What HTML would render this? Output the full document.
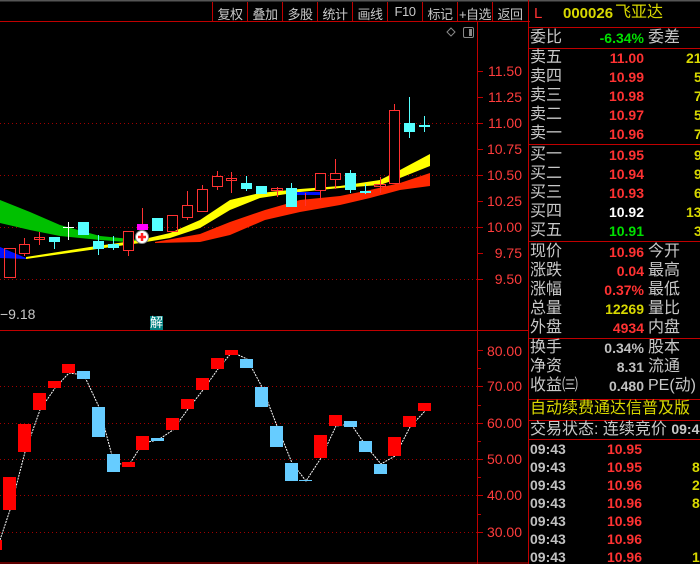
<!DOCTYPE html>
<html><head><meta charset="utf-8"><style>
*{margin:0;padding:0;box-sizing:border-box}
body{width:700px;height:564px;background:#000;overflow:hidden;position:relative;font-family:"Liberation Sans","Noto Sans CJK SC",sans-serif}
.t{position:absolute;white-space:nowrap;line-height:1}
.lb{color:#c8c8c8;font-size:16px}
.n{font-family:"Liberation Sans",sans-serif;font-weight:bold;font-size:14px;text-align:right}
.r{color:#ff3232}.y{color:#d8d800}.g{color:#00e000}.w{color:#fff}.gr{color:#c0c0c0}
.btn{position:absolute;top:4px;color:#c8c8c8;font-size:13px;width:34px;text-align:center;white-space:nowrap;letter-spacing:-0.5px}
</style></head><body>
<svg width="700" height="564" style="position:absolute;left:0;top:0">
<line x1="0" y1="0.5" x2="700" y2="0.5" stroke="#555" stroke-width="2"/>
<line x1="0" y1="21.5" x2="530" y2="21.5" stroke="#c00000"/>
<g stroke="#c00000">
<line x1="212.5" y1="2" x2="212.5" y2="21"/><line x1="247.5" y1="2" x2="247.5" y2="21"/><line x1="282.5" y1="2" x2="282.5" y2="21"/><line x1="317.5" y1="2" x2="317.5" y2="21"/><line x1="352.5" y1="2" x2="352.5" y2="21"/><line x1="387.5" y1="2" x2="387.5" y2="21"/><line x1="422.5" y1="2" x2="422.5" y2="21"/><line x1="457.5" y1="2" x2="457.5" y2="21"/><line x1="492.5" y1="2" x2="492.5" y2="21"/>
<line x1="477.5" y1="21" x2="477.5" y2="564"/>
<line x1="528.5" y1="0" x2="528.5" y2="564"/>
<line x1="0" y1="330.5" x2="528" y2="330.5"/>
<line x1="0" y1="563" x2="528" y2="563"/>
</g>
<path d="M447 32 l4 -4 l4 4 l-4 4z" fill="none" stroke="#888"/>
<rect x="463.5" y="27.5" width="10" height="10" rx="1.5" fill="none" stroke="#888"/><rect x="469" y="29" width="3" height="7" fill="#888"/>
<g stroke="#a00000" stroke-dasharray="1,3">
<line x1="0" y1="123.5" x2="477" y2="123.5"/><line x1="0" y1="175.5" x2="477" y2="175.5"/><line x1="0" y1="227.5" x2="477" y2="227.5"/><line x1="0" y1="279.5" x2="477" y2="279.5"/>
<line x1="0" y1="386.5" x2="477" y2="386.5"/><line x1="0" y1="423.5" x2="477" y2="423.5"/><line x1="0" y1="459.5" x2="477" y2="459.5"/><line x1="0" y1="495.5" x2="477" y2="495.5"/><line x1="0" y1="532.5" x2="477" y2="532.5"/>
</g>
<g stroke="#c00000">
<line x1="477" y1="71.5" x2="483" y2="71.5"/><line x1="477" y1="97.5" x2="483" y2="97.5"/><line x1="477" y1="123.5" x2="483" y2="123.5"/><line x1="477" y1="149.5" x2="483" y2="149.5"/><line x1="477" y1="175.5" x2="483" y2="175.5"/><line x1="477" y1="201.5" x2="483" y2="201.5"/><line x1="477" y1="227.5" x2="483" y2="227.5"/><line x1="477" y1="253.5" x2="483" y2="253.5"/><line x1="477" y1="279.5" x2="483" y2="279.5"/>
<line x1="477" y1="350.5" x2="483" y2="350.5"/><line x1="477" y1="368.5" x2="481" y2="368.5"/><line x1="477" y1="386.5" x2="483" y2="386.5"/><line x1="477" y1="405.5" x2="481" y2="405.5"/><line x1="477" y1="423.5" x2="483" y2="423.5"/><line x1="477" y1="441.5" x2="481" y2="441.5"/><line x1="477" y1="459.5" x2="483" y2="459.5"/><line x1="477" y1="477.5" x2="481" y2="477.5"/><line x1="477" y1="495.5" x2="483" y2="495.5"/><line x1="477" y1="514.5" x2="481" y2="514.5"/><line x1="477" y1="532.5" x2="483" y2="532.5"/>
</g>
<g fill="#ff3c3c" font-family="Liberation Sans" font-size="14" text-anchor="end">
<text x="522" y="76">11.50</text><text x="522" y="102">11.25</text><text x="522" y="128">11.00</text><text x="522" y="154">10.75</text><text x="522" y="180">10.50</text><text x="522" y="206">10.25</text><text x="522" y="232">10.00</text><text x="522" y="258">9.75</text><text x="522" y="284">9.50</text>
<text x="522" y="356">80.00</text><text x="522" y="391">70.00</text><text x="522" y="428">60.00</text><text x="522" y="464">50.00</text><text x="522" y="500">40.00</text><text x="522" y="537">30.00</text>
</g>
<path d="M0 200 L30 212 L60 225 L100 236 L140 240 L140 243 L100 240 L60 236 L30 230 L0 223Z" fill="#00c000"/>
<path d="M0 247 L26 258 L26 259 L0 258Z" fill="#0010ff"/>
<path d="M26 257 L90 247 L140 240 L170 233 L200 220 L230 200 L260 193 L300 189 L340 186 L380 180 L400 170 L430 154 L430 166 L400 178 L380 185 L340 188 L300 192 L260 198 L230 210 L200 228 L170 238 L140 243 L90 250 L26 259Z" fill="#ffff00"/>
<path d="M292 192 L320 192 L320 195 L292 195Z" fill="#0010ff"/>
<path d="M155 242 L200 234 L230 222 L265 210 L300 200 L340 196 L370 190 L400 183 L430 173 L430 186 L400 190 L370 198 L340 205 L300 212 L265 220 L230 235 L200 242 L155 243Z" fill="#ff2800"/>
<g stroke="#ff3232" fill="none">
<rect x="4.5" y="248.5" width="11" height="29"/>
<line x1="24.5" y1="238" x2="24.5" y2="256"/><rect x="19.5" y="244.5" width="10" height="9" fill="#000"/>
<line x1="39.5" y1="232" x2="39.5" y2="245"/><rect x="34.5" y="237.5" width="10" height="2"/>
<line x1="128.5" y1="231" x2="128.5" y2="256"/><rect x="123.5" y="231.5" width="10" height="19" fill="#000"/>
<line x1="142.5" y1="208" x2="142.5" y2="224"/>
<rect x="167.5" y="215.5" width="10" height="16"/>
<line x1="187.5" y1="191" x2="187.5" y2="220"/><rect x="182.5" y="205.5" width="10" height="12" fill="#000"/>
<line x1="202.5" y1="185" x2="202.5" y2="211"/><rect x="197.5" y="189.5" width="10" height="22" fill="#000"/>
<line x1="217.5" y1="171" x2="217.5" y2="190"/><rect x="212.5" y="176.5" width="10" height="10" fill="#000"/>
<line x1="231.5" y1="172" x2="231.5" y2="193"/><rect x="226.5" y="178.5" width="10" height="2"/>
<line x1="277.5" y1="187" x2="277.5" y2="197"/><rect x="271.5" y="188.5" width="11" height="2"/>
<line x1="305.5" y1="193" x2="305.5" y2="206"/><line x1="320.5" y1="190" x2="320.5" y2="200"/>
<rect x="315.5" y="173.5" width="10" height="17" fill="#000"/>
<line x1="335.5" y1="159" x2="335.5" y2="189"/><rect x="330.5" y="173.5" width="10" height="6" fill="#000"/>
<line x1="380.5" y1="177" x2="380.5" y2="193"/><rect x="374.5" y="184.5" width="11" height="2"/>
<line x1="394.5" y1="104" x2="394.5" y2="110"/><rect x="389.5" y="110.5" width="10" height="73" fill="#000"/>
</g>
<rect x="137" y="224" width="11" height="6" fill="#ff00ff"/>
<g fill="#55ffff" stroke="#55ffff">
<line x1="54.5" y1="237" x2="54.5" y2="249"/><rect x="49" y="237" width="11" height="5" stroke="none"/>
<rect x="78" y="222" width="11" height="13" stroke="none"/>
<line x1="98.5" y1="235" x2="98.5" y2="255"/><rect x="93" y="241" width="11" height="8" stroke="none"/>
<line x1="113.5" y1="236" x2="113.5" y2="250"/><rect x="108" y="244" width="11" height="4" stroke="none"/>
<rect x="152" y="218" width="11" height="13" stroke="none"/>
<line x1="246.5" y1="176" x2="246.5" y2="191"/><rect x="241" y="183" width="11" height="6" stroke="none"/>
<rect x="256" y="186" width="11" height="8" stroke="none"/>
<line x1="291.5" y1="183" x2="291.5" y2="207"/><rect x="286" y="188" width="11" height="19" stroke="none"/>
<line x1="350.5" y1="170" x2="350.5" y2="193"/><rect x="345" y="173" width="11" height="17" stroke="none"/>
<line x1="365.5" y1="184" x2="365.5" y2="194"/><rect x="360" y="191" width="11" height="2" stroke="none"/>
<line x1="409.5" y1="97" x2="409.5" y2="138"/><rect x="404" y="123" width="11" height="9" stroke="none"/>
<line x1="424.5" y1="116" x2="424.5" y2="132"/><rect x="419" y="125" width="11" height="2" stroke="none"/>
</g>
<g stroke="#fff"><line x1="68.5" y1="222" x2="68.5" y2="240"/><line x1="63" y1="227.5" x2="74" y2="227.5"/></g>
<circle cx="142" cy="237" r="6.5" fill="#fff" stroke="#888"/>
<path d="M138 237h8M142 233v8" stroke="#ff2020" stroke-width="2.5"/>
<polyline points="0,540 10,510 25,452 40,410 55,388 69,373 84,375 99,407 114,463 129,465 143,443 158,440 173,430 188,409 203,390 218,369 232,352 247,359 262,387 277,426 292,463 306,481 321,458 336,426 351,424 366,446 381,464 395,456 410,427 425,411" fill="none" stroke="#fff" stroke-dasharray="2,1"/>
<g fill="#ff0000">
<rect x="0" y="540" width="2" height="10"/><rect x="3" y="477" width="13" height="33"/><rect x="18" y="424" width="13" height="28"/><rect x="33" y="393" width="13" height="17"/><rect x="48" y="381" width="13" height="7"/><rect x="62" y="364" width="13" height="9"/>
<rect x="122" y="462" width="13" height="5"/><rect x="136" y="436" width="13" height="14"/><rect x="166" y="418" width="13" height="12"/><rect x="181" y="399" width="13" height="10"/><rect x="196" y="378" width="13" height="12"/><rect x="211" y="358" width="13" height="11"/><rect x="225" y="350" width="13" height="5"/>
<rect x="314" y="435" width="13" height="23"/><rect x="329" y="415" width="13" height="11"/><rect x="388" y="437" width="13" height="19"/><rect x="403" y="416" width="13" height="11"/><rect x="418" y="403" width="13" height="8"/>
</g>
<g fill="#66ccff">
<rect x="77" y="371" width="13" height="8"/><rect x="92" y="407" width="13" height="30"/><rect x="107" y="454" width="13" height="18"/><rect x="151" y="438" width="13" height="3"/><rect x="240" y="359" width="13" height="9"/><rect x="255" y="387" width="13" height="20"/>
<rect x="270" y="426" width="13" height="21"/><rect x="285" y="463" width="13" height="18"/><rect x="299" y="480" width="13" height="1"/><rect x="344" y="421" width="13" height="6"/><rect x="359" y="441" width="13" height="11"/><rect x="374" y="464" width="13" height="10"/>
</g>
<g stroke="#c00000">
<line x1="529" y1="27.5" x2="700" y2="27.5"/><line x1="529" y1="48.5" x2="700" y2="48.5"/><line x1="529" y1="144.5" x2="700" y2="144.5"/><line x1="529" y1="241.5" x2="700" y2="241.5"/><line x1="529" y1="338.5" x2="700" y2="338.5"/><line x1="529" y1="399.5" x2="700" y2="399.5"/><line x1="529" y1="420.5" x2="700" y2="420.5"/><line x1="529" y1="439.5" x2="700" y2="439.5"/>
</g>
</svg>
<div class="t" style="left:0;top:307px;color:#c8c8c8;font-size:14px">−9.18</div>
<div class="t" style="left:150px;top:316px;width:13px;height:14px;background:#008080;color:#fff;font-size:13px;text-align:center">解</div>
<div class="btn" style="left:213px">复权</div><div class="btn" style="left:248px">叠加</div><div class="btn" style="left:283px">多股</div><div class="btn" style="left:318px">统计</div><div class="btn" style="left:353px">画线</div><div class="btn" style="left:388px">F10</div><div class="btn" style="left:423px">标记</div><div class="btn" style="left:458px">+自选</div><div class="btn" style="left:493px">返回</div>
<div class="t r" style="left:534px;top:6px;font-size:15px">L</div>
<div class="t y" style="left:563px;top:6px;font-size:15px;font-weight:bold">000026</div>
<div class="t y" style="left:615px;top:5px;font-size:16px">飞亚达</div>
<div class="t lb" style="left:530px;top:30px">委比</div><div class="t n g" style="right:56px;top:31px">-6.34%</div><div class="t lb" style="left:648px;top:30px">委差</div>
<div class="t lb" style="left:530px;top:50px">卖五</div><div class="t n r" style="right:56px;top:51px">11.00</div><div class="t n y" style="left:686px;top:51px">21</div>
<div class="t lb" style="left:530px;top:69px">卖四</div><div class="t n r" style="right:56px;top:70px">10.99</div><div class="t n y" style="left:694px;top:70px">5</div>
<div class="t lb" style="left:530px;top:88px">卖三</div><div class="t n r" style="right:56px;top:89px">10.98</div><div class="t n y" style="left:694px;top:89px">7</div>
<div class="t lb" style="left:530px;top:107px">卖二</div><div class="t n r" style="right:56px;top:108px">10.97</div><div class="t n y" style="left:694px;top:108px">5</div>
<div class="t lb" style="left:530px;top:126px">卖一</div><div class="t n r" style="right:56px;top:127px">10.96</div><div class="t n y" style="left:694px;top:127px">7</div>
<div class="t lb" style="left:530px;top:147px">买一</div><div class="t n r" style="right:56px;top:148px">10.95</div><div class="t n y" style="left:694px;top:148px">9</div>
<div class="t lb" style="left:530px;top:166px">买二</div><div class="t n r" style="right:56px;top:167px">10.94</div><div class="t n y" style="left:694px;top:167px">9</div>
<div class="t lb" style="left:530px;top:185px">买三</div><div class="t n r" style="right:56px;top:186px">10.93</div><div class="t n y" style="left:694px;top:186px">6</div>
<div class="t lb" style="left:530px;top:204px">买四</div><div class="t n w" style="right:56px;top:205px">10.92</div><div class="t n y" style="left:686px;top:205px">13</div>
<div class="t lb" style="left:530px;top:223px">买五</div><div class="t n g" style="right:56px;top:224px">10.91</div><div class="t n y" style="left:694px;top:224px">3</div>
<div class="t lb" style="left:530px;top:244px">现价</div><div class="t n r" style="right:56px;top:245px">10.96</div><div class="t lb" style="left:648px;top:244px">今开</div>
<div class="t lb" style="left:530px;top:263px">涨跌</div><div class="t n r" style="right:56px;top:264px">0.04</div><div class="t lb" style="left:648px;top:263px">最高</div>
<div class="t lb" style="left:530px;top:282px">涨幅</div><div class="t n r" style="right:56px;top:283px">0.37%</div><div class="t lb" style="left:648px;top:282px">最低</div>
<div class="t lb" style="left:530px;top:301px">总量</div><div class="t n y" style="right:56px;top:302px">12269</div><div class="t lb" style="left:648px;top:301px">量比</div>
<div class="t lb" style="left:530px;top:320px">外盘</div><div class="t n r" style="right:56px;top:321px">4934</div><div class="t lb" style="left:648px;top:320px">内盘</div>
<div class="t lb" style="left:530px;top:340px">换手</div><div class="t n gr" style="right:56px;top:341px">0.34%</div><div class="t lb" style="left:648px;top:340px">股本</div>
<div class="t lb" style="left:530px;top:359px">净资</div><div class="t n gr" style="right:56px;top:360px">8.31</div><div class="t lb" style="left:648px;top:359px">流通</div>
<div class="t lb" style="left:530px;top:378px">收益㈢</div><div class="t n gr" style="right:56px;top:379px">0.480</div><div class="t lb" style="left:648px;top:378px">PE(动)</div>
<div class="t" style="left:530px;top:401px;color:#d8d800;font-size:16px">自动续费通达信普及版</div>
<div class="t lb" style="left:530px;top:422px">交易状态: 连续竞价 <b style="font-family:'Liberation Sans';font-size:14px">09:43</b></div>
<div style="position:absolute;left:530px;top:442px;width:170px;height:122px;overflow:hidden;font-family:'Liberation Sans',sans-serif;font-weight:bold;font-size:14px">
<div style="position:relative;height:18px"><span class="t gr" style="left:0">09:43</span><span class="t r" style="right:58px">10.95</span></div>
<div style="position:relative;height:18px"><span class="t gr" style="left:0">09:43</span><span class="t r" style="right:58px">10.95</span><span class="t y" style="left:162px">8</span></div>
<div style="position:relative;height:18px"><span class="t gr" style="left:0">09:43</span><span class="t r" style="right:58px">10.96</span><span class="t y" style="left:162px">2</span></div>
<div style="position:relative;height:18px"><span class="t gr" style="left:0">09:43</span><span class="t r" style="right:58px">10.96</span><span class="t y" style="left:162px">8</span></div>
<div style="position:relative;height:18px"><span class="t gr" style="left:0">09:43</span><span class="t r" style="right:58px">10.96</span></div>
<div style="position:relative;height:18px"><span class="t gr" style="left:0">09:43</span><span class="t r" style="right:58px">10.96</span></div>
<div style="position:relative;height:18px"><span class="t gr" style="left:0">09:43</span><span class="t r" style="right:58px">10.96</span><span class="t y" style="left:162px">1</span></div>
</div>
</body></html>
